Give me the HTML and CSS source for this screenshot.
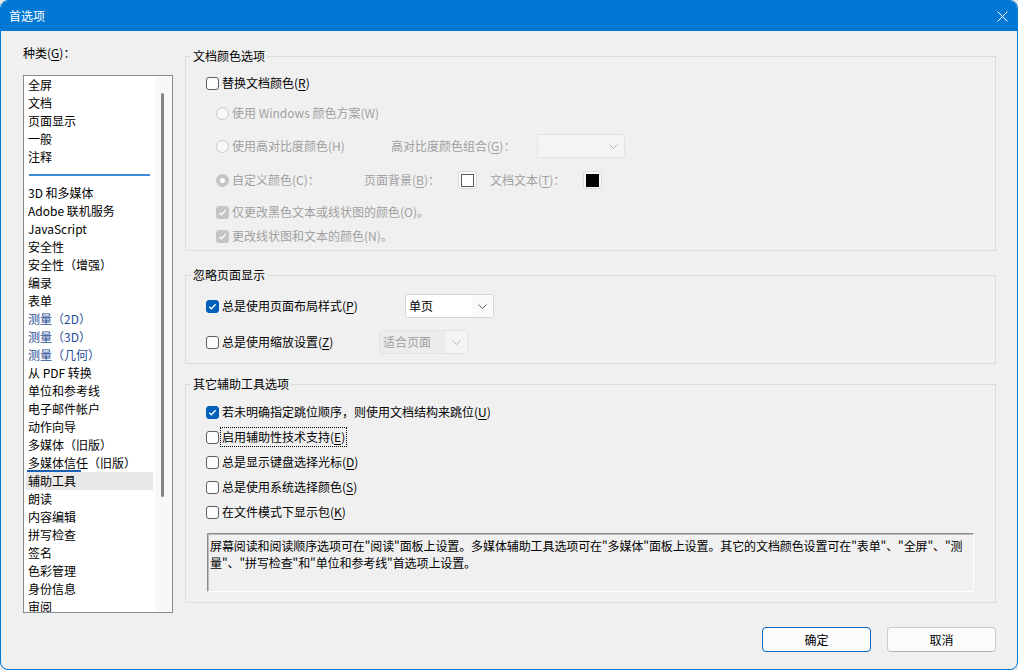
FILE: index.html
```html
<!DOCTYPE html>
<html lang="zh-CN">
<head>
    <meta charset="UTF-8">
    <meta name="viewport" content="width=device-width, initial-scale=1.0">
    <title>首选项</title>

    <link rel="stylesheet" href="styles.css">
</head>
<body>
    <div class="window">
        <div class="titlebar">
            <span class="title">首选项</span>
            <span class="close">
                <svg width="11" height="11" viewBox="0 0 11 11"><path d="M0.5 0.5 L10.5 10.5 M10.5 0.5 L0.5 10.5" stroke="#fff" stroke-width="1"/></svg>
            </span>
        </div>

        <div class="main">
            <!-- 왼쪽 카테고리 목록 -->
            <div class="side">
                <div class="side-label">种类(<u>G</u>)：</div>
                <div class="list">
                    <div class="list-items">
                        <div class="item">全屏</div>
                        <div class="item">文档</div>
                        <div class="item">页面显示</div>
                        <div class="item">一般</div>
                        <div class="item">注释</div>
                        <div class="item sep"><span class="sep-line"></span></div>
                        <div class="item">3D 和多媒体</div>
                        <div class="item">Adobe 联机服务</div>
                        <div class="item">JavaScript</div>
                        <div class="item">安全性</div>
                        <div class="item">安全性（增强）</div>
                        <div class="item">编录</div>
                        <div class="item">表单</div>
                        <div class="item blue">测量（2D）</div>
                        <div class="item blue">测量（3D）</div>
                        <div class="item blue">测量（几何）</div>
                        <div class="item">从 PDF 转换</div>
                        <div class="item">单位和参考线</div>
                        <div class="item">电子邮件帐户</div>
                        <div class="item">动作向导</div>
                        <div class="item">多媒体（旧版）</div>
                        <div class="item hover">多媒体信任（旧版）</div>
                        <div class="item selected">辅助工具</div>
                        <div class="item">朗读</div>
                        <div class="item">内容编辑</div>
                        <div class="item">拼写检查</div>
                        <div class="item">签名</div>
                        <div class="item">色彩管理</div>
                        <div class="item">身份信息</div>
                        <div class="item">审阅</div>
                    </div>
                    <div class="scrollbar"><div class="thumb"></div></div>
                </div>
            </div>

            <!-- 오른쪽 옵션 패널 -->
            <div class="panel">
                <fieldset class="group group-colors">
                    <legend>文档颜色选项</legend>

                    <div class="row c1">
                        <span class="cb"></span>
                        <span class="txt">替换文档颜色(<u>R</u>)</span>
                    </div>
                    <div class="row c2 indent dis">
                        <span class="rd"></span>
                        <span class="txt">使用 Windows 颜色方案(W)</span>
                    </div>
                    <div class="row c3 indent dis">
                        <span class="cell w-hc">
                            <span class="rd"></span>
                            <span class="txt">使用高对比度颜色(H)</span>
                        </span>
                        <span class="cell w-hc-label">高对比度颜色组合(<u>G</u>)：</span>
                        <span class="select select-dis w-hc-select">
                            <span class="select-value"></span>
                            <span class="select-arrow"><svg width="9" height="5" viewBox="0 0 9 5"><path d="M0.5 0.5 L4.5 4.5 L8.5 0.5" fill="none" stroke="#b5b5b5"/></svg></span>
                        </span>
                    </div>
                    <div class="row c4 indent dis">
                        <span class="cell w-custom">
                            <span class="rd sel"></span>
                            <span class="txt">自定义颜色(C)：</span>
                        </span>
                        <span class="cell w-bg-label">页面背景(<u>B</u>)：</span>
                        <span class="swatch"><span class="swatch-in white"></span></span>
                        <span class="cell w-text-label">文档文本(<u>T</u>)：</span>
                        <span class="swatch"><span class="swatch-in black"></span></span>
                    </div>
                    <div class="row c5 indent dis">
                        <span class="cb dis-on"><svg width="11" height="11" viewBox="0 0 11 11"><path d="M2.3 5.8 L4.4 7.8 L8.6 3.3" fill="none" stroke="#fff" stroke-width="1.3"/></svg></span>
                        <span class="txt">仅更改黑色文本或线状图的颜色(O)。</span>
                    </div>
                    <div class="row c6 indent dis">
                        <span class="cb dis-on"><svg width="11" height="11" viewBox="0 0 11 11"><path d="M2.3 5.8 L4.4 7.8 L8.6 3.3" fill="none" stroke="#fff" stroke-width="1.3"/></svg></span>
                        <span class="txt">更改线状图和文本的颜色(N)。</span>
                    </div>
                </fieldset>

                <fieldset class="group group-page">
                    <legend>忽略页面显示</legend>

                    <div class="row p1">
                        <span class="cell w-layout">
                            <span class="cb on"><svg width="11" height="11" viewBox="0 0 11 11"><path d="M2.3 5.8 L4.4 7.8 L8.6 3.3" fill="none" stroke="#fff" stroke-width="1.3"/></svg></span>
                            <span class="txt">总是使用页面布局样式(<u>P</u>)</span>
                        </span>
                        <span class="select">
                            <span class="select-value">单页</span>
                            <span class="select-arrow"><svg width="9" height="5" viewBox="0 0 9 5"><path d="M0.5 0.5 L4.5 4.5 L8.5 0.5" fill="none" stroke="#606060"/></svg></span>
                        </span>
                    </div>
                    <div class="row p2">
                        <span class="cell w-zoom">
                            <span class="cb"></span>
                            <span class="txt">总是使用缩放设置(<u>Z</u>)</span>
                        </span>
                        <span class="select select-dis">
                            <span class="select-value">适合页面</span>
                            <span class="select-arrow"><svg width="9" height="5" viewBox="0 0 9 5"><path d="M0.5 0.5 L4.5 4.5 L8.5 0.5" fill="none" stroke="#b5b5b5"/></svg></span>
                        </span>
                    </div>
                </fieldset>

                <fieldset class="group group-tools">
                    <legend>其它辅助工具选项</legend>

                    <div class="row t1">
                        <span class="cb on"><svg width="11" height="11" viewBox="0 0 11 11"><path d="M2.3 5.8 L4.4 7.8 L8.6 3.3" fill="none" stroke="#fff" stroke-width="1.3"/></svg></span>
                        <span class="txt">若未明确指定跳位顺序，则使用文档结构来跳位(<u>U</u>)</span>
                    </div>
                    <div class="row t2">
                        <span class="cb"></span>
                        <span class="txt focus">启用辅助性技术支持(<u>E</u>)</span>
                    </div>
                    <div class="row t2">
                        <span class="cb"></span>
                        <span class="txt">总是显示键盘选择光标(<u>D</u>)</span>
                    </div>
                    <div class="row t2">
                        <span class="cb"></span>
                        <span class="txt">总是使用系统选择颜色(<u>S</u>)</span>
                    </div>
                    <div class="row t2">
                        <span class="cb"></span>
                        <span class="txt">在文件模式下显示包(<u>K</u>)</span>
                    </div>

                    <div class="helpbox">
                        屏幕阅读和阅读顺序选项可在"阅读"面板上设置。多媒体辅助工具选项可在"多媒体"面板上设置。其它的文档颜色设置可在"表单"、"全屏"、"测<br>量"、"拼写检查"和"单位和参考线"首选项上设置。
                    </div>
                </fieldset>
            </div>
        </div>

        <div class="footer">
            <button type="button" class="btn btn-primary">确定</button>
            <button type="button" class="btn">取消</button>
        </div>
    </div>
</body>
</html>
```

FILE: styles.css
```css
body {
    margin: 0;
    background-color: #e9e9e9;
    font-family: "Noto Sans CJK SC", "Noto Sans", sans-serif;
    font-size: 12px;
    color: #000;
}

u {
    text-decoration: underline;
    text-underline-offset: 2px;
}

.window {
    width: 1018px;
    height: 670px;
    box-sizing: border-box;
    border: 1px solid #0078d4;
    border-radius: 8px;
    overflow: hidden;
    background-color: #f0f0f0;
}

.titlebar {
    height: 30px;
    background-color: #0078d4;
    color: #fff;
    display: flex;
    align-items: center;
    justify-content: space-between;
    padding: 0 9px 0 8px;
}

.titlebar .title {
    line-height: 18px;
}

.titlebar .close {
    display: flex;
}

.main {
    display: flex;
    height: 582px;
    box-sizing: border-box;
    padding: 13px 21px 0 22px;
}

/* left list */
.side {
    width: 150px;
    flex: none;
}

.side-label {
    line-height: 18px;
}

.list {
    margin-top: 13px;
    height: 538px;
    box-sizing: border-box;
    border: 1px solid #868a91;
    background-color: #fff;
    display: flex;
    overflow: hidden;
}

.list-items {
    flex: 1;
    padding-left: 2px;
}

.item {
    line-height: 18px;
    height: 18px;
    padding-left: 2px;
    white-space: nowrap;
    position: relative;
}

.item.blue {
    color: #1f4c94;
}

.item.selected {
    background-color: #e8e8e8;
    margin-right: 2px;
}

.item.hover::after {
    content: "";
    position: absolute;
    left: 1px;
    top: 16px;
    width: 54px;
    height: 2px;
    background-color: #1a5fb4;
}

.item.sep {
    display: flex;
    align-items: center;
    padding: 0 0 0 3px;
}

.sep-line {
    display: block;
    width: 121px;
    height: 2px;
    background-color: #3f8ad6;
}

.scrollbar {
    width: 17px;
    background-color: #f8f8f8;
    padding: 17px 0 0 6px;
    box-sizing: border-box;
}

.thumb {
    width: 3px;
    height: 404px;
    border-radius: 2px;
    background-color: #868686;
}

/* right panel */
.panel {
    flex: 1;
    margin-left: 12px;
    margin-top: 3px;
}

.group {
    margin: 0;
    border: 1px solid #dcdcdc;
    padding: 0 0 0 20px;
    min-width: 0;
}

.group legend {
    line-height: 18px;
    padding: 0 2px;
    margin-left: -15px;
}

.group-colors {
    padding-bottom: 4px;
}

.group-page {
    margin-top: 15px;
    padding-bottom: 9px;
}

.group-tools {
    margin-top: 11px;
    padding-bottom: 10px;
}

.row {
    display: flex;
    align-items: center;
    height: 20px;
    line-height: 18px;
    white-space: nowrap;
}

.row.indent {
    margin-left: 10px;
}

.row.dis {
    color: #a0a0a0;
}

.c1 { margin-top: 8px; }
.c2 { margin-top: 10px; }
.c3 { margin-top: 11px; height: 24px; }
.c4 { margin-top: 12px; }
.c5 { margin-top: 12px; }
.c6 { margin-top: 4px; }

.p1 { margin-top: 10px; height: 24px; }
.p2 { margin-top: 12px; height: 24px; }

.t1 { margin-top: 9px; }
.t2 { margin-top: 5px; }

.cell {
    display: flex;
    align-items: center;
    flex: none;
}

.w-hc { width: 175px; }
.w-hc-label { width: 146px; }
.w-custom { width: 148px; }
.w-bg-label { width: 94px; }
.w-text-label { width: 93px; margin-left: 13px; }
.w-layout { width: 199px; }
.w-zoom { width: 173px; }

.txt {
    margin-left: 3px;
}

.txt.focus {
    outline: 1px dotted #000;
    outline-offset: 0;
    padding: 0 1px;
    margin-left: 2px;
}

/* checkbox / radio */
.cb {
    width: 13px;
    height: 13px;
    box-sizing: border-box;
    border: 1px solid #5f5f5f;
    border-radius: 3px;
    background-color: #fdfdfd;
    flex: none;
    display: flex;
    align-items: center;
    justify-content: center;
}

.cb.on {
    background-color: #005fb8;
    border-color: #005fb8;
}

.cb.dis-on {
    background-color: #c5c5c5;
    border-color: #c5c5c5;
}

.rd {
    width: 13px;
    height: 13px;
    box-sizing: border-box;
    border: 1px solid #c8c8c8;
    border-radius: 50%;
    background-color: #f8f8f8;
    flex: none;
    display: flex;
    align-items: center;
    justify-content: center;
}

.rd.sel {
    background-color: #c5c5c5;
    border-color: #c5c5c5;
}

.rd.sel::after {
    content: "";
    width: 5px;
    height: 5px;
    border-radius: 50%;
    background-color: #fff;
}

/* dropdowns */
.select {
    display: flex;
    width: 89px;
    height: 24px;
    box-sizing: border-box;
    border: 1px solid #d6d6d6;
    border-radius: 3px;
    background-color: #fff;
    flex: none;
}

.select-value {
    flex: 1;
    padding-left: 3px;
    line-height: 22px;
}

.select-arrow {
    width: 21px;
    display: flex;
    align-items: center;
    justify-content: center;
    background-color: #fafafa;
    border-radius: 0 3px 3px 0;
}

.select-dis {
    background-color: #f4f4f4;
    border-color: #e3e3e3;
    color: #a0a0a0;
}

.select-dis .select-value {
    background-color: #ececec;
}

.select-dis .select-arrow {
    background-color: #f4f4f4;
}

.w-hc-select {
    width: 88px;
}

.w-hc-select .select-value {
    background-color: #f4f4f4;
}

/* colour swatches */
.swatch {
    width: 19px;
    height: 18px;
    box-sizing: border-box;
    border: 1px solid #dadada;
    border-radius: 3px;
    background-color: #f9f9f9;
    display: flex;
    align-items: center;
    justify-content: center;
    flex: none;
}

.swatch-in {
    width: 13px;
    height: 13px;
    box-sizing: border-box;
}

.swatch-in.white {
    background-color: #fff;
    border: 1px solid #5a5a5a;
}

.swatch-in.black {
    background-color: #000;
}

/* help text */
.helpbox {
    margin: 11px 0 0 1px;
    width: 767px;
    height: 59px;
    box-sizing: border-box;
    border: 1px solid;
    border-color: #8c8c8c #fff #fff #8c8c8c;
    box-shadow: inset 1px 1px 0 #bdbdbd;
    padding: 3px 0 0 2px;
    line-height: 17px;
    white-space: nowrap;
    letter-spacing: -0.1px;
}

/* bottom buttons */
.footer {
    display: flex;
    justify-content: flex-end;
    gap: 16px;
    padding: 14px 21px 0 22px;
}

.btn {
    width: 109px;
    height: 25px;
    box-sizing: border-box;
    border: 1px solid #cacaca;
    border-bottom-color: #b5b5b5;
    border-radius: 4px;
    background-color: #fbfbfb;
    font-family: "Noto Sans CJK SC", "Noto Sans", sans-serif;
    font-size: 12px;
    color: #000;
    padding: 0;
}

.btn-primary {
    border-color: #0067c0;
}
```
